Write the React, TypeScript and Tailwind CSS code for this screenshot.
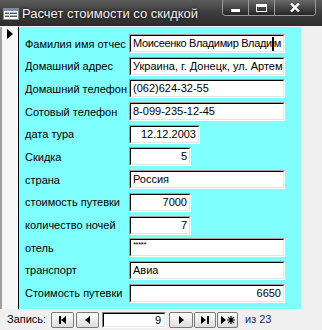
import React from 'react';

type Row = {
  label: string;
  value: string;
  width: string;
  right?: boolean;
  caret?: boolean;
  small?: boolean;
};

const rows: Row[] = [
  { label: 'Фамилия имя отчес', value: 'Моисеенко Владимир Влади', width: 'w-[156px]', caret: true },
  { label: 'Домашний адрес', value: 'Украина, г. Донецк, ул. Артема', width: 'w-[156px]' },
  { label: 'Домашний телефон', value: '(062)624-32-55', width: 'w-[156px]' },
  { label: 'Сотовый телефон', value: '8-099-235-12-45', width: 'w-[156px]' },
  { label: 'дата тура', value: '12.12.2003', width: 'w-[71px]', right: true },
  { label: 'Скидка', value: '5', width: 'w-[62px]', right: true },
  { label: 'страна', value: 'Россия', width: 'w-[156px]' },
  { label: 'стоимость путевки', value: '7000', width: 'w-[62px]', right: true },
  { label: 'количество ночей', value: '7', width: 'w-[62px]', right: true },
  { label: 'отель', value: '*****', width: 'w-[156px]', small: true },
  { label: 'транспорт', value: 'Авиа', width: 'w-[156px]' },
  { label: 'Стоимость путевки', value: '6650', width: 'w-[156px]', right: true },
];

// sunken win32 edit box
const Field = ({ row }: { row: Row }) => (
  <div className={`${row.width} h-[19px] border border-t-[#a0a0a0] border-l-[#a0a0a0] border-b-white border-r-white`}>
    <div className="h-full bg-white border border-t-black border-l-black border-b-[#e3e3e3] border-r-[#e3e3e3] overflow-hidden">
      {row.small ? (
        <div className="px-[2px] text-[8px] leading-[9px] tracking-[-0.5px]">{row.value}</div>
      ) : (
        <div
          className={`px-[2px] text-[11px] leading-[15px] whitespace-nowrap flex items-center ${
            row.right ? 'justify-end' : ''
          } ${row.caret ? 'tracking-[-0.35px]' : ''}`}
        >
          {row.value}
          {row.caret && (
            <>
              <span className="inline-block shrink-0 w-[2px] h-[14px] bg-black" />
              <span>м</span>
            </>
          )}
        </div>
      )}
    </div>
  </div>
);

const NavBtn = ({ children, w }: { children: React.ReactNode; w: string }) => (
  <div
    className={`${w} h-[16px] rounded-[2px] border border-[#7a7a7a] bg-gradient-to-b from-white to-[#dcdcdc] flex items-center justify-center`}
  >
    {children}
  </div>
);

const Tri = ({ left }: { left?: boolean }) => (
  <svg width="5" height="8" viewBox="0 0 5 8">
    {left ? <path d="M5 0 L0 4 L5 8 Z" fill="#000" /> : <path d="M0 0 L5 4 L0 8 Z" fill="#000" />}
  </svg>
);

const Bar = () => <span className="inline-block w-[2px] h-[8px] bg-black" />;

export default function App() {
  return (
    <div className="w-[322px] h-[330px] bg-[#f0f0f0] overflow-hidden font-['Liberation_Sans',Arial,sans-serif] text-black">
      {/* title bar */}
      <div className="h-[26px] flex items-start bg-gradient-to-b from-[#5c5c5c] via-[#3c3c3c] to-[#2c2c2c]">
        <svg width="16" height="12" viewBox="0 0 16 12" className="ml-[3px] mt-[8px]">
          <rect x="0.5" y="0.5" width="15" height="11" fill="#fff" stroke="#8a8a8a" />
          <rect x="1" y="1" width="14" height="2" fill="#6d8fc7" />
          <rect x="2" y="4.5" width="4" height="1.5" fill="#5a5a5a" />
          <rect x="7" y="4.5" width="7" height="1.5" fill="#5a5a5a" />
          <rect x="2" y="7.5" width="4" height="1.5" fill="#5a5a5a" />
          <rect x="7" y="7.5" width="7" height="1.5" fill="#5a5a5a" />
        </svg>
        <div className="ml-[3px] mt-[5px] text-[13px] leading-[18px] text-[#f4f4f4] [text-shadow:0_0_3px_#000]">
          Расчет стоимости со скидкой
        </div>
        <div className="ml-auto mr-[6px] flex h-[16px] rounded-b-[4px] border border-t-0 border-[#9a9a9a] overflow-hidden">
          <div className="w-[26px] h-full bg-gradient-to-b from-[#6a6a6a] to-[#262626] border-r border-[#9a9a9a] flex items-end justify-center pb-[3px]">
            <span className="w-[9px] h-[3px] bg-white" />
          </div>
          <div className="w-[26px] h-full bg-gradient-to-b from-[#6a6a6a] to-[#262626] border-r border-[#9a9a9a] flex items-center justify-center">
            <span className="w-[11px] h-[8px] border border-white border-t-[3px]" />
          </div>
          <div className="w-[40px] h-full bg-gradient-to-b from-[#6a6a6a] to-[#262626] flex items-center justify-center">
            <svg width="10" height="9" viewBox="0 0 10 9">
              <path d="M1 0.5 L9 8.5 M9 0.5 L1 8.5" stroke="#fff" strokeWidth="2.4" />
            </svg>
          </div>
        </div>
      </div>

      {/* form body */}
      <div className="flex h-[282px] mt-[1px]">
        <div className="w-[2px] bg-[#a0a0a0]" />
        <div className="w-[17px] bg-[#f6f6f6] border-r border-black pt-[2px] flex justify-center">
          <svg width="6" height="10" viewBox="0 0 6 10">
            <path d="M0 0 L6 5 L0 10 Z" fill="#000" />
          </svg>
        </div>
        <div className="w-[282px] bg-[#80ffff] pt-[7px] pl-[6px] flex flex-col gap-y-[3.7px]">
          {rows.map((r) => (
            <div key={r.label} className="flex items-center h-[19px]">
              <div className="w-[104px] text-[11px] leading-[14px] whitespace-nowrap overflow-hidden">{r.label}</div>
              <Field row={r} />
            </div>
          ))}
        </div>
        <div className="flex-1 bg-[#f0f0f0]" />
      </div>

      {/* navigation */}
      <div className="h-[21px] flex items-center text-[11px]">
        <span className="ml-[7px] w-[44px]">Запись:</span>
        <div className="flex gap-[2px]">
          <NavBtn w="w-[23px]">
            <Bar />
            <Tri left />
          </NavBtn>
          <NavBtn w="w-[23px]">
            <Tri left />
          </NavBtn>
        </div>
        <div className="ml-[3px] w-[64px] h-[16px] border border-t-[#808080] border-l-[#808080] border-b-white border-r-white">
          <div className="h-full bg-white border border-t-black border-l-black border-b-[#e3e3e3] border-r-[#e3e3e3] flex items-center justify-end pr-[3px] leading-[12px]">
            9
          </div>
        </div>
        <div className="ml-[3px] flex gap-[1px]">
          <NavBtn w="w-[24px]">
            <Tri />
          </NavBtn>
          <NavBtn w="w-[22px]">
            <Tri />
            <span className="ml-[1px]" />
            <Bar />
          </NavBtn>
          <NavBtn w="w-[21px]">
            <Tri />
            <svg width="8" height="8" viewBox="0 0 8 8" className="ml-[1px]">
              <path d="M4 0 V8 M0 4 H8 M1 1 L7 7 M7 1 L1 7" stroke="#000" strokeWidth="1.2" />
            </svg>
          </NavBtn>
        </div>
        <span className="ml-[7px] text-[#1a2a66]">из 23</span>
      </div>
    </div>
  );
}
